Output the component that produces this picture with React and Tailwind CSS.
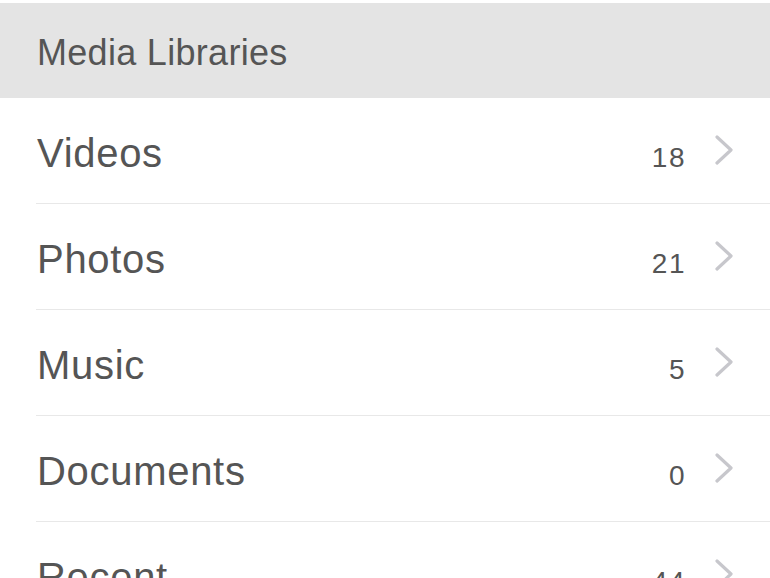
import React from 'react'

const items = [
  { label: 'Videos', count: 18 },
  { label: 'Photos', count: 21 },
  { label: 'Music', count: 5 },
  { label: 'Documents', count: 0 },
  { label: 'Recent', count: 44 },
]

const Chevron = () => (
  <svg width="20" height="30" viewBox="0 0 20 30" className="shrink-0">
    <polyline points="3,2 17,15 3,28" fill="none" stroke="#c7c7cc" strokeWidth="3.2" strokeLinecap="round" strokeLinejoin="round" />
  </svg>
)

const App = () => {
  return (
    <div className="w-[770px] h-[578px] overflow-hidden bg-white pt-[3px] text-[#555555]" style={{ fontFamily: '"Liberation Sans", Arial, sans-serif' }}>
      {/* header */}
      <div className="h-[95px] bg-[#e4e4e4] flex items-center pl-[37px] pt-[4px]">
        <h1 className="text-[36px] leading-none tracking-[0.3px]">Media Libraries</h1>
      </div>

      {/* rows */}
      <div className="ml-[36px]">
        {items.map((item) => (
          <div key={item.label} className="h-[106px] border-b-[1.5px] border-[#e8e8e8] flex items-center pr-[36px]">
            <div className="flex-1 flex items-baseline pl-px pt-[4px]">
              <span className="flex-1 text-[40px] leading-none tracking-[0.7px]">{item.label}</span>
              <span className="text-[28px] leading-none tracking-[1.5px]">{item.count}</span>
            </div>
            <div className="ml-[28px] -mt-[2px]">
              <Chevron />
            </div>
          </div>
        ))}
      </div>
    </div>
  )
}

export default App
